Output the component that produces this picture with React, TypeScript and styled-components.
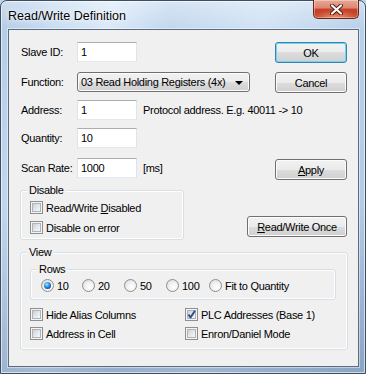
import React from 'react';
import styled, { createGlobalStyle } from 'styled-components';

const GlobalStyle = createGlobalStyle`
  html, body { margin: 0; padding: 0; background: #bdd3ea; }
  body {
    font-family: "Liberation Sans", Arial, sans-serif;
    font-size: 11px;
    letter-spacing: -0.3px;
    color: #000;
  }
  * { box-sizing: border-box; }
`;

const Window = styled.div`
  width: 366px;
  height: 374px;
  border: 1px solid #3d4e62;
  border-radius: 7px 7px 0 0;
  padding: 0 6px 6px 7px;
  display: flex;
  flex-direction: column;
  background:
    linear-gradient(to bottom, rgba(255,255,255,0.35) 0px, rgba(255,255,255,0) 28px),
    linear-gradient(to bottom, rgba(70,100,140,0) 55%, rgba(70,100,140,0.35) 100%),
    linear-gradient(100deg, #b3cbe6 0%, #c9ddf2 14%, #dbe9f8 26%, #c2d7ee 40%, #d0e2f4 62%, #bcd2eb 82%, #aec7e3 100%);
  box-shadow: inset 0 0 0 1px rgba(255,255,255,0.6);
`;

const TitleBar = styled.div`
  height: 28px;
  display: flex;
  justify-content: space-between;
  align-items: flex-start;
`;

const Title = styled.div`
  margin-top: 8px;
  font-size: 12.5px;
  letter-spacing: 0;
  line-height: 14px;
  color: #000;
  text-shadow: 0 0 6px rgba(255,255,255,0.95), 0 0 2px rgba(255,255,255,0.9);
`;

const CloseButton = styled.div`
  width: 46px;
  height: 19px;
  margin-top: -1px;
  border: 1px solid #6b2419;
  border-top: none;
  border-radius: 0 0 5px 5px;
  background:
    radial-gradient(ellipse 60% 45% at 50% 100%, rgba(255,170,120,0.8), rgba(255,170,120,0) 100%),
    linear-gradient(to bottom, #eaa897 0%, #dc8670 45%, #c8432a 50%, #bb3a22 100%);
  box-shadow: inset 0 0 0 1px rgba(255,255,255,0.35);
  display: flex;
  align-items: center;
  justify-content: center;
`;

const Client = styled.div`
  flex: 1;
  border: 1px solid #5b6c80;
  background: #f0f0f0;
  padding: 12px 11px 0 11px;
  display: flex;
  flex-direction: column;
  box-shadow: 0 0 0 1px rgba(255,255,255,0.45);
`;

const FormRow = styled.div<{ $mt: number }>`
  height: 20px;
  margin-top: ${p => p.$mt}px;
  padding-left: 1px;
  display: flex;
  align-items: center;
`;

const Label = styled.span`
  width: 56px;
  flex: none;
  white-space: nowrap;
`;

const TextBox = styled.div`
  width: 60px;
  height: 20px;
  flex: none;
  background: #fff;
  border: 1px solid #e2e3ea;
  border-top-color: #abadb3;
  border-bottom-color: #e3e9ef;
  padding-left: 3px;
  line-height: 18px;
`;

const Aside = styled.span<{ $ml: number }>`
  margin-left: ${p => p.$ml}px;
  white-space: nowrap;
`;

const Select = styled.div`
  width: 173px;
  height: 20px;
  flex: none;
  border: 1px solid #707070;
  border-radius: 3px;
  background: linear-gradient(to bottom, #f2f2f2 0%, #ebebeb 50%, #dddddd 50%, #cfcfcf 100%);
  box-shadow: inset 0 0 0 1px #fcfcfc;
  display: flex;
  align-items: center;
  justify-content: space-between;
  padding: 0 6px 0 3px;
  white-space: nowrap;
`;

const Arrow = styled.span`
  width: 0;
  height: 0;
  border-left: 4px solid transparent;
  border-right: 4px solid transparent;
  border-top: 4px solid #000;
  margin-top: 1px;
`;

const Button = styled.div<{ $w: number; $mt?: number; $default?: boolean }>`
  width: ${p => p.$w}px;
  height: 21px;
  flex: none;
  margin-left: auto;
  align-self: flex-start;
  margin-top: ${p => p.$mt ?? 0}px;
  border: 1px solid ${p => (p.$default ? '#3c7fb1' : '#707070')};
  border-radius: 3px;
  background: linear-gradient(to bottom, #f2f2f2 0%, #ebebeb 50%, #dddddd 50%, #cfcfcf 100%);
  box-shadow: inset 0 0 0 1px ${p => (p.$default ? '#6fd6f6' : '#fcfcfc')};
  display: flex;
  align-items: center;
  justify-content: center;
  white-space: nowrap;
`;

const U = styled.span`
  text-decoration: underline;
  text-underline-offset: 1px;
`;

const Middle = styled.div`
  display: flex;
  margin-top: 6px;
`;

const Group = styled.fieldset<{ $w?: number; $pad: string }>`
  margin: 0;
  min-width: 0;
  ${p => (p.$w ? `width: ${p.$w}px;` : '')}
  flex: none;
  border: 1px solid #d5dfe5;
  border-radius: 3px;
  padding: ${p => p.$pad};
  box-shadow: inset 0 0 0 1px #fff;
`;

const Legend = styled.legend<{ $ml: number }>`
  padding: 0 2px;
  margin-left: ${p => p.$ml}px;
  line-height: 13px;
  background: #f0f0f0;
`;

const ViewGroup = styled(Group)`
  margin-top: 6px;
`;

const RowsGroup = styled(Group)`
  display: flex;
`;

const CheckStack = styled.div`
  display: flex;
  flex-direction: column;
  gap: 7px;
`;

const CheckGrid = styled.div`
  margin-top: 8px;
  display: grid;
  grid-template-columns: 155px 1fr;
  row-gap: 6px;
`;

const Item = styled.div<{ $w?: number }>`
  height: 13px;
  display: flex;
  align-items: center;
  gap: 3px;
  white-space: nowrap;
  ${p => (p.$w ? `width: ${p.$w}px; flex: none;` : '')}
`;

const Box = styled.span`
  position: relative;
  width: 13px;
  height: 13px;
  flex: none;
  border: 1px solid #8e8f8f;
  background: #f4f4f4;
  &::before {
    content: '';
    position: absolute;
    left: 1px; top: 1px; right: 1px; bottom: 1px;
    border: 1px solid #aeb3b9;
    background: linear-gradient(135deg, #cbcfd5 0%, #e4e6e9 50%, #f7f7f7 100%);
  }
  & > svg { position: absolute; left: -1px; top: -1px; }
`;

const Radio = styled.span<{ $on?: boolean }>`
  position: relative;
  width: 13px;
  height: 13px;
  flex: none;
  border-radius: 50%;
  border: 1px solid #8e8f8f;
  background: radial-gradient(circle at 60% 65%, #ffffff 0%, #f1f1f1 45%, #d2d4d8 100%);
  &::after {
    content: '';
    display: ${p => (p.$on ? 'block' : 'none')};
    position: absolute;
    left: 2px; top: 2px;
    width: 7px; height: 7px;
    border-radius: 50%;
    background: radial-gradient(circle at 40% 35%, #b6e6ff 0%, #3d9ee6 35%, #1462b2 65%, #0b3a78 100%);
  }
`;

const Check = () => (
  <svg width="13" height="13" viewBox="0 0 13 13">
    <path d="M3.5 6.5 L5.5 9.5 L10 2.8" fill="none" stroke="#2a4d93" strokeWidth="2" strokeLinejoin="round" />
  </svg>
);

const CheckItem = ({ checked, children }: { checked?: boolean; children: React.ReactNode }) => (
  <Item>
    <Box>{checked && <Check />}</Box>
    <span>{children}</span>
  </Item>
);

const RadioItem = ({ on, w, children }: { on?: boolean; w?: number; children: React.ReactNode }) => (
  <Item $w={w}>
    <Radio $on={on} />
    <span>{children}</span>
  </Item>
);

export default function App() {
  return (
    <>
      <GlobalStyle />
      <Window>
        <TitleBar>
          <Title>Read/Write Definition</Title>
          <CloseButton>
            <svg width="13" height="11" viewBox="0 0 13 11">
              <path d="M2 1.5 L11 9.5 M11 1.5 L2 9.5" stroke="#4a1a14" strokeWidth="4" strokeLinecap="round" />
              <path d="M2 1.5 L11 9.5 M11 1.5 L2 9.5" stroke="#fff" strokeWidth="2.2" strokeLinecap="round" />
            </svg>
          </CloseButton>
        </TitleBar>
        <Client>
          <FormRow $mt={0}>
            <Label>Slave ID:</Label>
            <TextBox>1</TextBox>
            <Button $w={72} $default>OK</Button>
          </FormRow>
          <FormRow $mt={10}>
            <Label>Function:</Label>
            <Select>
              <span>03 Read Holding Registers (4x)</span>
              <Arrow />
            </Select>
            <Button $w={72}>Cancel</Button>
          </FormRow>
          <FormRow $mt={8}>
            <Label>Address:</Label>
            <TextBox>1</TextBox>
            <Aside $ml={6}>Protocol address. E.g. 40011 -&gt; 10</Aside>
          </FormRow>
          <FormRow $mt={8}>
            <Label>Quantity:</Label>
            <TextBox>10</TextBox>
          </FormRow>
          <FormRow $mt={10}>
            <Label>Scan Rate:</Label>
            <TextBox>1000</TextBox>
            <Aside $ml={6}>[ms]</Aside>
            <Button $w={72} $mt={1}><span><U>A</U>pply</span></Button>
          </FormRow>
          <Middle>
            <Group $w={164} $pad="4px 9px 5px 9px">
              <Legend $ml={-3}>Disable</Legend>
              <CheckStack>
                <CheckItem>Read/Write <U>D</U>isabled</CheckItem>
                <CheckItem>Disable on error</CheckItem>
              </CheckStack>
            </Group>
            <Button $w={100} $mt={32}><span><U>R</U>ead/Write Once</span></Button>
          </Middle>
          <ViewGroup $w={328} $pad="4px 11px 9px 9px">
            <Legend $ml={-3}>View</Legend>
            <RowsGroup $pad="3px 10px 7px 10px">
              <Legend $ml={-4}>Rows</Legend>
              <RadioItem on w={41}>10</RadioItem>
              <RadioItem w={42}>20</RadioItem>
              <RadioItem w={42}>50</RadioItem>
              <RadioItem w={43}>100</RadioItem>
              <RadioItem>Fit to Quantity</RadioItem>
            </RowsGroup>
            <CheckGrid>
              <CheckItem>Hide Alias Columns</CheckItem>
              <CheckItem checked>PLC Addresses (Base 1)</CheckItem>
              <CheckItem>Address in Cell</CheckItem>
              <CheckItem>Enron/Daniel Mode</CheckItem>
            </CheckGrid>
          </ViewGroup>
        </Client>
      </Window>
    </>
  );
}
